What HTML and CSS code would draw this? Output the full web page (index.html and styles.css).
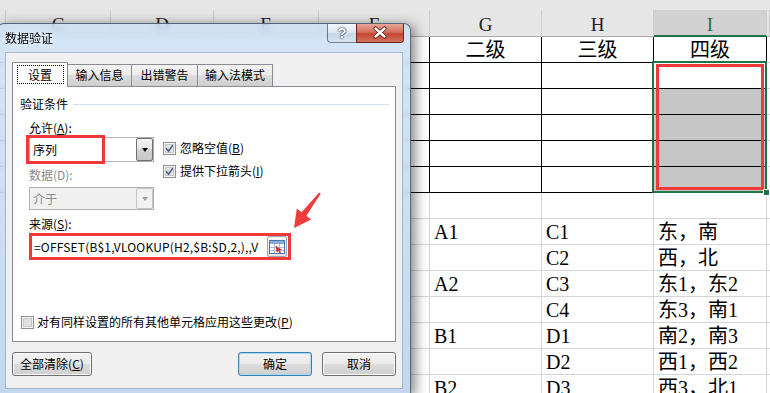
FILE: index.html
```html
<!DOCTYPE html>
<html lang="zh-CN">
  <head>
    <meta charset="UTF-8" />
    <title>数据验证</title>
    <link rel="stylesheet" href="styles.css">
  </head>
  <body>
    <div class="sheet">
      <div class="band"></div>

      <div class="hd"></div>
      <div class="hd">C</div>
      <div class="hd">D</div>
      <div class="hd">E</div>
      <div class="hd">F</div>
      <div class="hd">G</div>
      <div class="hd">H</div>
      <div class="hd on">I</div>
      <div class="hd"></div>

      <!-- 表头行 -->
      <div class="cell lead blk"></div>
      <div class="cell blk mid">二级</div>
      <div class="cell blk mid">三级</div>
      <div class="cell blk mid">四级</div>
      <div class="cell"></div>

      <div class="cell lead blk"></div>
      <div class="cell blk"></div>
      <div class="cell blk"></div>
      <div class="cell blk"></div>
      <div class="cell"></div>

      <div class="cell lead blk"></div>
      <div class="cell blk"></div>
      <div class="cell blk"></div>
      <div class="cell blk grey"></div>
      <div class="cell"></div>

      <div class="cell lead blk"></div>
      <div class="cell blk"></div>
      <div class="cell blk"></div>
      <div class="cell blk grey"></div>
      <div class="cell"></div>

      <div class="cell lead blk"></div>
      <div class="cell blk"></div>
      <div class="cell blk"></div>
      <div class="cell blk grey"></div>
      <div class="cell"></div>

      <div class="cell lead blk"></div>
      <div class="cell blk"></div>
      <div class="cell blk"></div>
      <div class="cell blk grey"></div>
      <div class="cell"></div>

      <div class="cell lead"></div>
      <div class="cell"></div>
      <div class="cell"></div>
      <div class="cell"></div>
      <div class="cell"></div>

      <!-- 数据源 -->
      <div class="cell lead"></div>
      <div class="cell">A1</div>
      <div class="cell">C1</div>
      <div class="cell">东，南</div>
      <div class="cell"></div>

      <div class="cell lead"></div>
      <div class="cell"></div>
      <div class="cell">C2</div>
      <div class="cell">西，北</div>
      <div class="cell"></div>

      <div class="cell lead"></div>
      <div class="cell">A2</div>
      <div class="cell">C3</div>
      <div class="cell">东1，东2</div>
      <div class="cell"></div>

      <div class="cell lead"></div>
      <div class="cell"></div>
      <div class="cell">C4</div>
      <div class="cell">东3，南1</div>
      <div class="cell"></div>

      <div class="cell lead"></div>
      <div class="cell">B1</div>
      <div class="cell">D1</div>
      <div class="cell">南2，南3</div>
      <div class="cell"></div>

      <div class="cell lead"></div>
      <div class="cell"></div>
      <div class="cell">D2</div>
      <div class="cell">西1，西2</div>
      <div class="cell"></div>

      <div class="cell lead"></div>
      <div class="cell">B2</div>
      <div class="cell">D3</div>
      <div class="cell">西3，北1</div>
      <div class="cell"></div>

      <div class="sel"><div class="mark"></div><i class="handle"></i></div>
    </div>

    <div class="dlg">
      <div class="titlebar">
        <span class="ttl">数据验证</span>
        <div class="caps">
          <span class="help">?</span>
          <span class="close">
            <svg width="46" height="17" viewBox="0 0 46 17">
              <path d="M18.5 4.5l9 8M27.5 4.5l-9 8" stroke="#5a1a12" stroke-width="4.2" stroke-linecap="round" />
              <path d="M18.5 4.5l9 8M27.5 4.5l-9 8" stroke="#fff" stroke-width="2.4" stroke-linecap="round" />
            </svg>
          </span>
        </div>
      </div>

      <div class="client">
        <div class="tabs">
          <div class="tab on"><span class="focus">设置</span></div>
          <div class="tab t2">输入信息</div>
          <div class="tab t3">出错警告</div>
          <div class="tab t4">输入法模式</div>
        </div>

        <div class="panel">
          <div class="grp">验证条件</div>

          <div class="allow">
            <div class="col">
              <div class="lbl">允许(<u>A</u>):</div>
              <div class="combo">
                序列
                <span class="drop"><i></i></span>
                <span class="hl"></span>
              </div>
              <div class="lbl dis">数据(D):</div>
              <div class="combo off">
                介于
                <span class="drop"><i></i></span>
              </div>
            </div>
            <div class="checks">
              <div class="chk">
                <svg class="box" width="13" height="13" viewBox="0 0 13 13">
                  <rect x="0.5" y="0.5" width="12" height="12" fill="#f6f6f6" stroke="#8e8f8f" />
                  <rect x="2.5" y="2.5" width="8" height="8" fill="#e4e4e4" stroke="#c6c6c6" />
                  <path d="M3.2 6.3l2.3 2.9 4.3-6" fill="none" stroke="#4a5f92" stroke-width="1.6" />
                </svg>
                <span>忽略空值(<u>B</u>)</span>
              </div>
              <div class="chk">
                <svg class="box" width="13" height="13" viewBox="0 0 13 13">
                  <rect x="0.5" y="0.5" width="12" height="12" fill="#f6f6f6" stroke="#8e8f8f" />
                  <rect x="2.5" y="2.5" width="8" height="8" fill="#e4e4e4" stroke="#c6c6c6" />
                  <path d="M3.2 6.3l2.3 2.9 4.3-6" fill="none" stroke="#4a5f92" stroke-width="1.6" />
                </svg>
                <span>提供下拉箭头(<u>I</u>)</span>
              </div>
            </div>
          </div>

          <div class="lbl src-lbl">来源(<u>S</u>):</div>
          <div class="src">
            <span class="formula">=OFFSET(B$1,VLOOKUP(H2,$B:$D,2,),,V</span>
            <span class="refedit">
              <svg width="16" height="14" viewBox="0 0 16 14">
                <rect x="0.5" y="0.5" width="15" height="13" fill="#fff" stroke="#4f74ad" />
                <rect x="1" y="1" width="14" height="3" fill="#8cacd8" />
                <path d="M1 7.5h14M1 10.5h14M5.5 4v9M10.5 4v9" stroke="#a9bfe0" />
                <path d="M6.5 5.5l6.5 4.5-2.3.4 1.4 2.2-1.3.8-1.4-2.3-1.6 1.6z" fill="#d8332a" />
              </svg>
            </span>
          </div>

          <div class="chk apply">
            <svg class="box" width="13" height="13" viewBox="0 0 13 13">
              <rect x="0.5" y="0.5" width="12" height="12" fill="#f6f6f6" stroke="#8e8f8f" />
              <rect x="2.5" y="2.5" width="8" height="8" fill="#e2e2e2" stroke="#c6c6c6" />
            </svg>
            <span>对有同样设置的所有其他单元格应用这些更改(<u>P</u>)</span>
          </div>
        </div>

        <div class="btns">
          <div class="btn clear">全部清除(<u>C</u>)</div>
          <div class="btn ok">确定</div>
          <div class="btn cancel">取消</div>
        </div>
      </div>
    </div>

    <svg class="arrow" width="40" height="44" viewBox="0 0 40 44">
      <polygon points="9,40 11.8,20.6 16.6,24.2 34.2,4.4 35.8,5.6 21.4,27.8 26.2,31.4" fill="#f03c3c" />
    </svg>
  </body>
</html>
```

FILE: styles.css
```css
* {
  box-sizing: border-box;
}
body {
  margin: 0;
  width: 770px;
  height: 393px;
  overflow: hidden;
  position: relative;
  background: #fff;
  font-family: "Liberation Serif", "Noto Sans CJK SC", serif;
}

/* 表格 */
.sheet {
  position: relative;
  display: grid;
  grid-template-columns: 6px 105px 103px 105px 111px 112px 112px 113px 3px;
  grid-template-rows: 10px 27px;
  grid-auto-rows: 26px;
}
.band {
  grid-column: 1 / -1;
  background: #e6e6e6;
}
.hd {
  background: #e6e6e6;
  border-right: 1px solid #cdcdcd;
  border-bottom: 1px solid #ababab;
  text-align: center;
  font-size: 19px;
  line-height: 22px;
  padding-top: 4px;
  color: #222;
}
.hd.on {
  background: #d2d2d2;
  border-bottom: 2px solid #217346;
  color: #217346;
}
.cell {
  border-right: 1px solid #d4d4d4;
  border-bottom: 1px solid #d4d4d4;
  font-size: 20px;
  line-height: 23px;
  padding: 2px 0 0 4px;
  white-space: nowrap;
  overflow: hidden;
  color: #000;
}
.cell.lead {
  grid-column: span 5;
}
.cell.blk {
  border-color: #000;
}
.cell.mid {
  text-align: center;
  padding-left: 0;
}
.cell.grey {
  background: #c6c6c6;
}
.sel {
  position: absolute;
  left: 652px;
  top: 61px;
  width: 115px;
  height: 132px;
  border: 2px solid #217346;
  padding: 1px 1px 1px 2px;
  display: flex;
}
.mark {
  flex: 1;
  border: 3px solid #f03a3a;
}
.handle {
  position: absolute;
  right: -5px;
  bottom: -5px;
  width: 7px;
  height: 7px;
  background: #217346;
  border: 1px solid #fff;
}

/* 对话框 */
.dlg {
  position: absolute;
  left: -3px;
  top: 23px;
  width: 414px;
  height: 371px;
  border: 1px solid rgba(30, 40, 60, 0.65);
  border-radius: 7px 7px 0 0;
  background: linear-gradient(rgba(204, 224, 245, 0.82), rgba(186, 210, 236, 0.88));
  backdrop-filter: blur(3px);
  box-shadow: 3px 3px 14px rgba(0, 0, 0, 0.55);
  padding: 0 7px 4px 7px;
  display: flex;
  flex-direction: column;
  font-family: "Noto Sans CJK SC", sans-serif;
  font-size: 12px;
  color: #000;
}
.titlebar {
  height: 28px;
  display: flex;
  justify-content: space-between;
  align-items: flex-start;
}
.ttl {
  margin-top: 6px;
  line-height: 16px;
  text-shadow: 0 0 6px rgba(255, 255, 255, 0.9);
}
.caps {
  display: flex;
  margin-right: -1px;
}
.help,
.close {
  height: 19px;
  border: 1px solid rgba(40, 50, 70, 0.6);
  border-top: none;
}
.help {
  width: 29px;
  border-radius: 0 0 0 4px;
  border-right: none;
  background: linear-gradient(rgba(255, 255, 255, 0.75), rgba(222, 232, 242, 0.7) 50%, rgba(196, 210, 226, 0.7) 50%, rgba(214, 226, 238, 0.8));
  text-align: center;
  font: bold 15px/18px "Liberation Sans", sans-serif;
  color: #fff;
  text-shadow: 0 0 1px #333, 0 0 1px #333, 0 0 2px #333;
}
.close {
  width: 48px;
  border-radius: 0 0 4px 0;
  border-color: #6a2419;
  background: linear-gradient(#e7a597, #d4705f 45%, #c2432f 55%, #d27360);
}
.close svg {
  display: block;
}
.client {
  flex: 1;
  background: #f0f0f0;
  border: 1px solid #a4b6cb;
  padding: 9px 6px 0 6px;
  display: flex;
  flex-direction: column;
}

/* 标签页 */
.tabs {
  display: flex;
  align-items: flex-end;
  height: 24px;
  position: relative;
  z-index: 1;
}
.tab {
  height: 22px;
  border: 1px solid #898c95;
  border-bottom: none;
  margin-right: -1px;
  background: linear-gradient(#f3f3f3, #ebebeb 50%, #dddddd 50%, #cfcfcf);
  text-align: center;
  line-height: 20px;
}
.tab.on {
  width: 56px;
  height: 25px;
  margin-bottom: -1px;
  background: #fff;
  position: relative;
  z-index: 2;
}
.t2 {
  width: 65px;
}
.t3 {
  width: 67px;
}
.t4 {
  width: 76px;
}
.focus {
  display: inline-block;
  margin-top: 2px;
  width: 47px;
  height: 19px;
  border: 1px dotted #000;
  line-height: 17px;
}
.panel {
  height: 256px;
  border: 1px solid #898c95;
  background: #fff;
  padding: 9px 0 0 7px;
  display: flex;
  flex-direction: column;
  align-items: flex-start;
}
.grp {
  align-self: stretch;
  display: flex;
  align-items: center;
  gap: 5px;
  height: 16px;
  line-height: 16px;
  margin-right: 6px;
}
.grp::after {
  content: "";
  flex: 1;
  height: 1px;
  background: #d5dfe5;
}
.lbl {
  line-height: 16px;
  height: 16px;
}
.lbl.dis {
  color: #8a8a8a;
  margin-top: 5px;
}
.allow {
  display: flex;
  margin: 8px 0 0 9px;
}
.col {
  width: 125px;
}
.combo {
  position: relative;
  width: 125px;
  height: 25px;
  margin-top: 1px;
  border: 1px solid #abadb3;
  background: #fff;
  display: flex;
  align-items: center;
  padding-left: 3px;
}
.drop {
  margin-left: auto;
  width: 17px;
  height: 23px;
  border: 1px solid #707070;
  border-radius: 2px;
  background: linear-gradient(#f4f4f4, #e4e4e4 50%, #d2d2d2 50%, #c8c8c8);
  display: flex;
  align-items: center;
  justify-content: center;
}
.drop i {
  border-top: 4px solid #000;
  border-left: 3.5px solid transparent;
  border-right: 3.5px solid transparent;
}
.combo.off {
  height: 23px;
  margin-top: 4px;
  background: #f0f0f0;
  border-color: #adb2b5;
  color: #8a8a8a;
}
.combo.off .drop {
  height: 21px;
  border-color: #c4c4c4;
  background: #f2f2f2;
}
.combo.off .drop i {
  border-top-color: #a0a0a0;
}
.hl {
  position: absolute;
  left: -4px;
  top: -3px;
  width: 79px;
  height: 29px;
  border: 3px solid #f03a3a;
}
.checks {
  margin-left: 9px;
  padding-top: 20px;
  display: flex;
  flex-direction: column;
  gap: 7px;
}
.chk {
  display: flex;
  align-items: center;
  gap: 4px;
  height: 16px;
  line-height: 16px;
  white-space: nowrap;
}
.box {
  flex: none;
}
.src-lbl {
  margin: 6px 0 0 9px;
}
.src {
  margin: 1px 0 0 9px;
  width: 262px;
  height: 27px;
  border: 3px solid #f03a3a;
  background: #fff;
  display: flex;
  align-items: center;
  padding-left: 2px;
}
.formula {
  flex: 1;
  overflow: hidden;
  white-space: nowrap;
  letter-spacing: 0.18px;
}
.refedit {
  width: 20px;
  height: 21px;
  margin-right: 1px;
  border: 1px solid #9aa6b6;
  border-radius: 2px;
  background: linear-gradient(#f7f7f7, #e4e4e4);
  display: flex;
  align-items: center;
  justify-content: center;
}
.apply {
  margin: 54px 0 0 1px;
  gap: 3px;
}

/* 按钮 */
.btns {
  display: flex;
  margin-top: 10px;
  height: 24px;
}
.btn {
  height: 24px;
  border: 1px solid #707070;
  border-radius: 3px;
  background: linear-gradient(#f2f2f2, #ebebeb 50%, #dddddd 50%, #cfcfcf);
  box-shadow: inset 0 0 0 1px #fbfbfb;
  line-height: 22px;
  text-align: center;
}
.clear {
  width: 80px;
}
.ok {
  width: 74px;
  margin-left: auto;
  border-color: #3c7fb1;
  box-shadow: inset 0 0 0 1px #9fdcf8;
}
.cancel {
  width: 74px;
  margin-left: 10px;
}

.arrow {
  position: absolute;
  left: 285px;
  top: 188px;
}
```
